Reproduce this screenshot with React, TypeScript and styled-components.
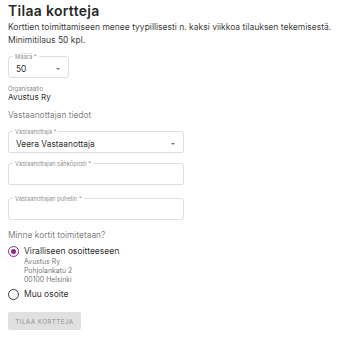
import React from "react";
import styled, { createGlobalStyle } from "styled-components";

const GlobalStyle = createGlobalStyle`
  html, body {
    margin: 0;
    padding: 0;
    background: #ffffff;
  }
  body {
    font-family: Inter, "Noto Sans", "Liberation Sans", sans-serif;
    color: rgba(0, 0, 0, 0.87);
  }
`;

const Page = styled.div`
  padding: 2px 8px 8px 8px;
  width: 339px;
  box-sizing: border-box;
  display: flex;
  flex-direction: column;
  align-items: flex-start;
`;

const Title = styled.h1`
  margin: 0;
  font-size: 14px;
  font-weight: 600;
  line-height: 18px;
  letter-spacing: 0.3px;
`;

const Lead = styled.p`
  margin: 1px 0 0 0;
  font-size: 8.5px;
  line-height: 13px;
  white-space: nowrap;
  color: rgba(0, 0, 0, 0.82);
`;

const Field = styled.div<{ $width: number; $top: number }>`
  position: relative;
  margin-top: ${({ $top }) => $top}px;
  padding: 4px 8px 0 7px;
  width: ${({ $width }) => $width}px;
  height: 22px;
  box-sizing: border-box;
  border: 1px solid #dedede;
  border-radius: 3px;
  display: flex;
  align-items: center;
  justify-content: space-between;
`;

const FloatLabel = styled.span`
  position: absolute;
  top: -4px;
  left: 4px;
  padding: 0 2px;
  background: #ffffff;
  font-size: 5.8px;
  line-height: 7px;
  color: rgba(0, 0, 0, 0.5);
  white-space: nowrap;
`;

const Value = styled.span`
  font-size: 8.4px;
  line-height: 10px;
`;

const Caret = styled.span`
  width: 0;
  height: 0;
  border-left: 2.5px solid transparent;
  border-right: 2.5px solid transparent;
  border-top: 2.5px solid rgba(0, 0, 0, 0.55);
`;

const SmallLabel = styled.div`
  margin-top: 7px;
  font-size: 5.9px;
  line-height: 7px;
  color: rgba(0, 0, 0, 0.55);
`;

const SmallValue = styled.div`
  margin-top: 1px;
  font-size: 8.2px;
  line-height: 9px;
`;

const Section = styled.div<{ $top: number }>`
  margin-top: ${({ $top }) => $top}px;
  font-size: 8.4px;
  line-height: 12px;
  color: rgba(0, 0, 0, 0.55);
`;

const RadioGroup = styled.div`
  display: flex;
  flex-direction: column;
  margin-top: 4px;
`;

const RadioRow = styled.div<{ $top: number }>`
  display: flex;
  align-items: flex-start;
  gap: 5px;
  margin-top: ${({ $top }) => $top}px;
`;

const Circle = styled.span<{ $checked: boolean }>`
  flex: none;
  width: 11px;
  height: 11px;
  box-sizing: border-box;
  border-radius: 50%;
  border: 1.3px solid ${({ $checked }) => ($checked ? "#8e248e" : "rgba(0,0,0,0.75)")};
  display: flex;
  align-items: center;
  justify-content: center;
  margin-top: 0.5px;

  &::after {
    content: "";
    width: 5px;
    height: 5px;
    border-radius: 50%;
    background: #8e248e;
    display: ${({ $checked }) => ($checked ? "block" : "none")};
  }
`;

const RadioText = styled.div`
  display: flex;
  flex-direction: column;
`;

const RadioLabel = styled.span`
  font-size: 8.5px;
  line-height: 12px;
`;

const Address = styled.span`
  font-size: 6.9px;
  line-height: 9px;
  color: rgba(0, 0, 0, 0.6);
`;

const SubmitButton = styled.button`
  margin-top: 12px;
  width: 73px;
  height: 18px;
  border: none;
  border-radius: 2px;
  background: #e0e0e0;
  color: rgba(0, 0, 0, 0.3);
  font-family: inherit;
  font-size: 6.2px;
  font-weight: 600;
  letter-spacing: 0.4px;
  padding: 0;
`;

export default function App() {
  return (
    <>
      <GlobalStyle />
      <Page>
        <Title>Tilaa kortteja</Title>
        <Lead>
          Korttien toimittamiseen menee tyypillisesti n. kaksi viikkoa tilauksen tekemisestä.
          <br />
          Minimitilaus 50 kpl.
        </Lead>

        <Field $width={61} $top={9}>
          <FloatLabel>Määrä *</FloatLabel>
          <Value>50</Value>
          <Caret />
        </Field>

        <SmallLabel>Organisaatio</SmallLabel>
        <SmallValue>Avustus Ry</SmallValue>

        <Section $top={7}>Vastaanottajan tiedot</Section>

        <Field $width={176} $top={10}>
          <FloatLabel>Vastaanottaja *</FloatLabel>
          <Value>Veera Vastaanottaja</Value>
          <Caret />
        </Field>

        <Field $width={176} $top={10}>
          <FloatLabel>Vastaanottajan sähköposti *</FloatLabel>
        </Field>

        <Field $width={176} $top={13}>
          <FloatLabel>Vastaanottajan puhelin *</FloatLabel>
        </Field>

        <Section $top={9}>Minne kortit toimitetaan?</Section>

        <RadioGroup>
          <RadioRow $top={0}>
            <Circle $checked />
            <RadioText>
              <RadioLabel>Viralliseen osoitteeseen</RadioLabel>
              <Address>Avustus Ry</Address>
              <Address>Pohjolankatu 2</Address>
              <Address>00100 Helsinki</Address>
            </RadioText>
          </RadioRow>
          <RadioRow $top={4}>
            <Circle $checked={false} />
            <RadioText>
              <RadioLabel>Muu osoite</RadioLabel>
            </RadioText>
          </RadioRow>
        </RadioGroup>

        <SubmitButton disabled>TILAA KORTTEJA</SubmitButton>
      </Page>
    </>
  );
}
